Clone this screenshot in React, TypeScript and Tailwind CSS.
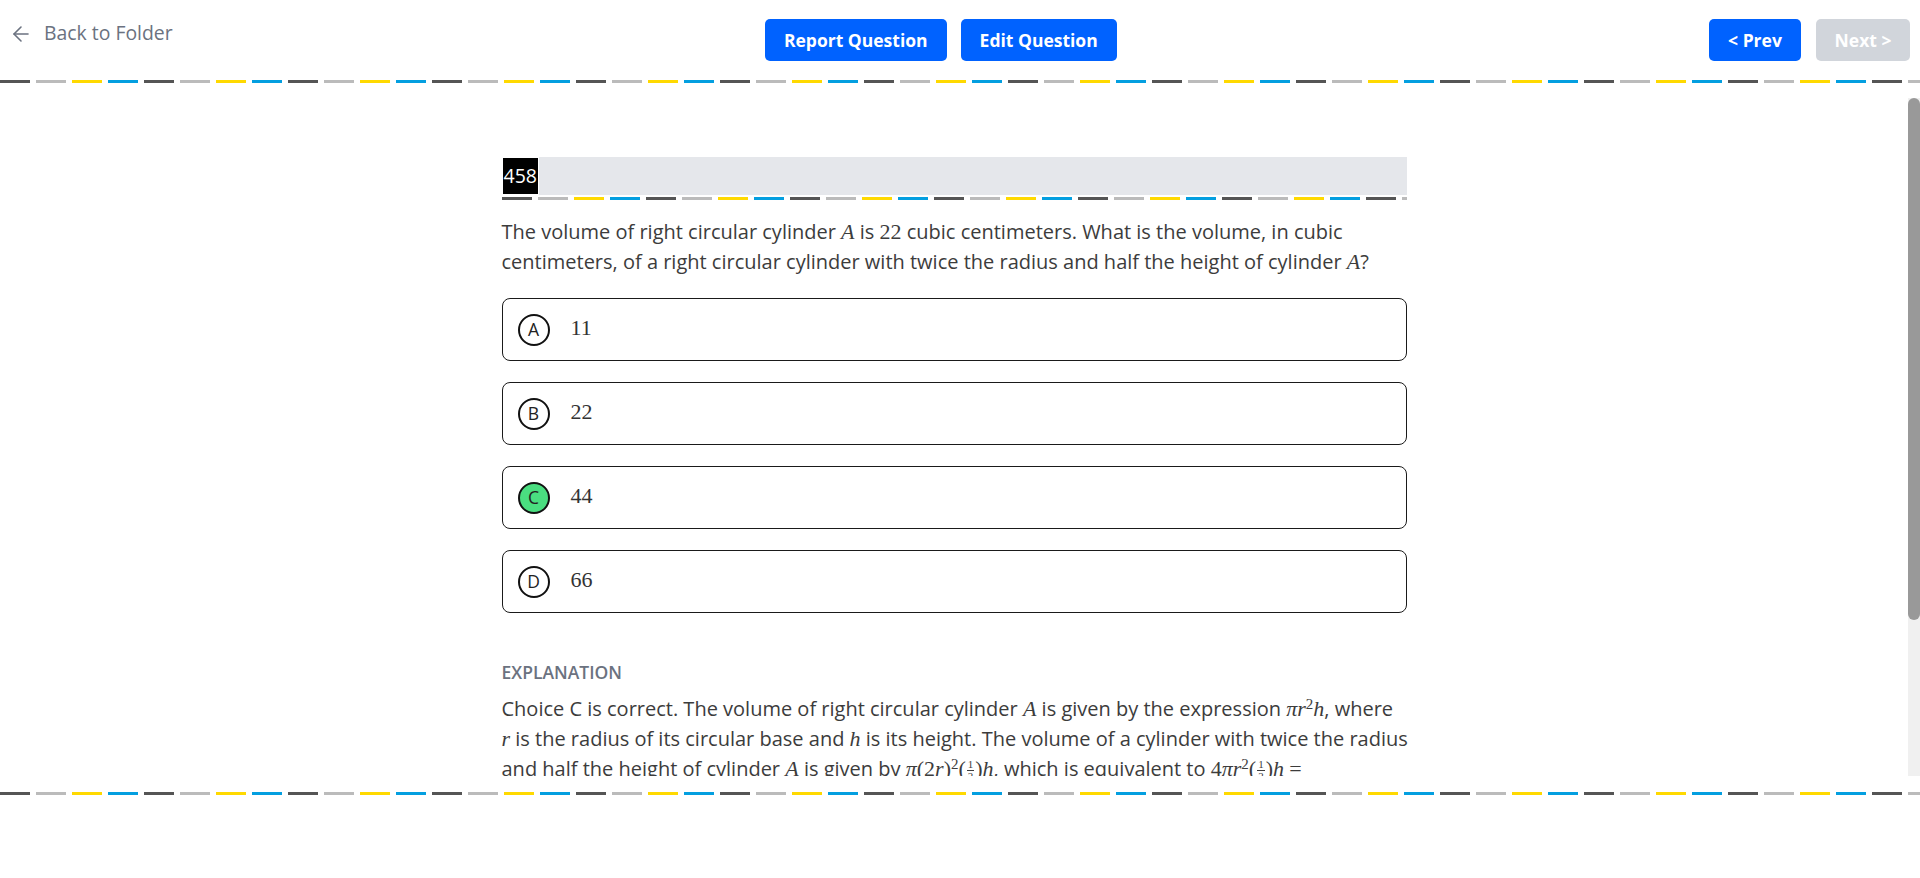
import React from 'react';
import { ArrowLeft } from 'lucide-react';

const dashes =
  'h-[3px] bg-[image:repeating-linear-gradient(90deg,#555_0px,#555_30px,transparent_30px,transparent_36px,#bbb_36px,#bbb_66px,transparent_66px,transparent_72px,#ffd900_72px,#ffd900_102px,transparent_102px,transparent_108px,#049fe0_108px,#049fe0_138px,transparent_138px,transparent_144px)]';

const choices = [
  { letter: 'A', value: '11' },
  { letter: 'B', value: '22' },
  { letter: 'C', value: '44' },
  { letter: 'D', value: '66' },
];
const correct = 'C';

// italic math variable
const V = ({ children }: { children: React.ReactNode }) => (
  <span className="font-['Liberation_Serif',serif] text-[22px] italic">{children}</span>
);
// upright math
const N = ({ children }: { children: React.ReactNode }) => (
  <span className="font-['Liberation_Serif',serif] text-[22px]">{children}</span>
);
const Sq = () => <sup className="font-['Liberation_Serif',serif] text-[15px]">2</sup>;
const Half = () => (
  <span className="inline-flex flex-col items-center align-middle font-['Liberation_Serif',serif] text-[11px] leading-[11px] mx-[1px]">
    <span>1</span>
    <span className="border-t border-[#3c3c3c] px-[1px]">2</span>
  </span>
);

const App = () => {
  return (
    <div className="h-[878px] flex flex-col bg-white font-['Open_Sans',sans-serif] text-[#3c3c3c]">
      <header className="h-[80px] flex items-start justify-between pt-[19px] pl-[9px] pr-[10px]">
        <a className="flex items-center gap-[11px] -mt-[1px] text-[19.4px] leading-[30px] text-[#6b7280] cursor-pointer">
          <ArrowLeft size={24} strokeWidth={1.6} className="mt-[2px]" />
          Back to Folder
        </a>
        <div className="flex gap-[14px]">
          <button className="h-[42px] px-[19px] rounded-[5px] bg-[#0062ff] text-white text-[17.5px] font-bold">
            Report Question
          </button>
          <button className="h-[42px] px-[19px] rounded-[5px] bg-[#0062ff] text-white text-[17.5px] font-bold">
            Edit Question
          </button>
        </div>
        <div className="flex gap-[15px]">
          <button className="h-[42px] w-[92px] rounded-[5px] bg-[#0062ff] text-white text-[17.5px] font-bold">
            &lt; Prev
          </button>
          <button className="h-[42px] w-[94px] rounded-[5px] bg-[#d1d5db] text-white text-[17.5px] font-bold">
            Next &gt;
          </button>
        </div>
      </header>
      <div className={dashes} />

      <main className="mt-[15px] h-[678px] flex">
        <div className="flex-1 overflow-hidden">
          <div className="w-[905px] mx-auto pt-[59px]">
            <div className="h-[38px] bg-[#e5e7eb] flex items-stretch">
              <div className="bg-black border border-white text-white text-[19.5px] leading-[36px] px-[1px]">458</div>
            </div>
            <div className={`mt-[2px] ${dashes}`} />

            <p className="mt-[17px] text-[20px] leading-[30px]">
              The volume of right circular cylinder <V>A</V> is <N>22</N> cubic centimeters. What is the volume, in cubic
              centimeters, of a right circular cylinder with twice the radius and half the height of cylinder <V>A</V>?
            </p>

            <div className="mt-[21px] flex flex-col gap-[21px]">
              {choices.map(c => (
                <div
                  key={c.letter}
                  className="h-[63px] flex items-center pl-[15px] border border-[#1a1a1a] rounded-lg"
                >
                  <span
                    className={
                      c.letter === correct
                        ? 'w-[32px] h-[32px] rounded-full border-2 border-[#111] bg-[#4ade80] flex items-center justify-center text-[17.5px] text-[#222]'
                        : 'w-[32px] h-[32px] rounded-full border-2 border-[#111] flex items-center justify-center text-[17.5px] text-[#222]'
                    }
                  >
                    {c.letter}
                  </span>
                  <span className="ml-[21px] -mt-[4px] font-['Liberation_Serif',serif] text-[22px] text-[#333]">
                    {c.value}
                  </span>
                </div>
              ))}
            </div>

            <h3 className="mt-[46px] text-[17.5px] leading-[26px] font-semibold text-[#6b7280] uppercase">Explanation</h3>
            <div className="mt-[9px] text-[20px] leading-[30px]">
              <div className="whitespace-nowrap">
                Choice C is correct. The volume of right circular cylinder <V>A</V> is given by the expression <V>πr</V>
                <Sq />
                <V>h</V>, where
              </div>
              <div className="whitespace-nowrap">
                <V>r</V> is the radius of its circular base and <V>h</V> is its height. The volume of a cylinder with twice the radius
              </div>
              <div className="whitespace-nowrap">
                and half the height of cylinder <V>A</V> is given by <V>π</V>
                <N>(2</N>
                <V>r</V>
                <N>)</N>
                <Sq />
                <N>(</N>
                <Half />
                <N>)</N>
                <V>h</V>, which is equivalent to <N>4</N>
                <V>πr</V>
                <Sq />
                <N>(</N>
                <Half />
                <N>)</N>
                <V>h</V> <N>=</N>
              </div>
              <p>
                <N>2</N>
                <V>πr</V>
                <Sq />
                <V>h</V>. Therefore, the volume of the new cylinder is twice the volume of cylinder <V>A</V>, or{' '}
                <N>2(22) = 44</N> cubic centimeters.
              </p>
            </div>
          </div>
        </div>
        <div className="w-[12px] bg-[#f0f0f0]">
          <div className="h-[522px] rounded-full bg-[#999]" />
        </div>
      </main>

      <div className={`mt-[16px] ${dashes}`} />
      <footer className="h-[83px]" />
    </div>
  );
};

export default App;
